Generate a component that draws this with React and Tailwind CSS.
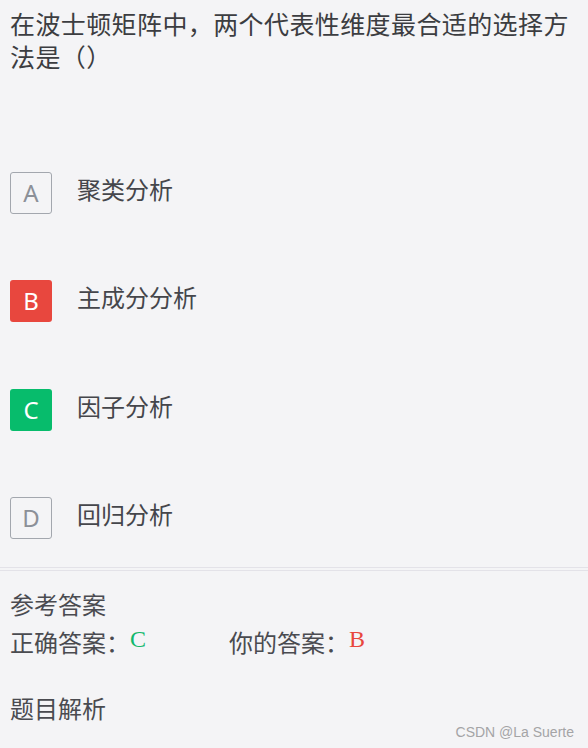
const options = [
  { key: "A", text: "聚类分析", state: "none" },
  { key: "B", text: "主成分分析", state: "wrong" },
  { key: "C", text: "因子分析", state: "right" },
  { key: "D", text: "回归分析", state: "none" },
];

const boxStyles = {
  none: "border border-[#a3a7ae] text-[#8c9098] bg-transparent",
  wrong: "bg-[#e8473e] text-white",
  right: "bg-[#07bc6c] text-white",
};

const font = "font-['Microsoft_YaHei','Noto_Sans_CJK_SC',sans-serif]";

export default function App() {
  return (
    <div className={`w-[588px] h-[748px] bg-[#f4f4f6] text-[#3c3d41] ${font} relative overflow-hidden`}>
      {/* Question */}
      <div className="px-[10px] pt-[7px] text-[25px] leading-[33px] tracking-[0.4px]">
        在波士顿矩阵中，两个代表性维度最合适的选择方法是（）
      </div>

      {/* Options */}
      <div className="mt-[99px] flex flex-col gap-[66.3px] pl-[10px]">
        {options.map((o) => (
          <div key={o.key} className="flex items-center h-[42px]">
            <div
              className={`w-[42px] h-[42px] rounded-[3px] flex items-center justify-center text-[24px] font-['Noto_Sans',sans-serif] ${boxStyles[o.state]}`}
            >
              {o.key}
            </div>
            <div className="ml-[25px] text-[24px] text-[#45464b] -mt-[8px]">{o.text}</div>
          </div>
        ))}
      </div>

      {/* Divider */}
      <div className="mt-[28px] border-t border-b border-[#e3e2e8] h-[4px]" />

      {/* Answer */}
      <div className="px-[10px] pt-[16px] text-[24px] text-[#4a4b50]">
        <div className="leading-[34px]">参考答案</div>
        <div className="mt-[3px] flex items-start leading-[36px]">
          <span>正确答案：</span>
          <span className="-mt-[3px] font-['Liberation_Serif',serif] text-[#12b86c] text-[24px]">C</span>
          <span className="ml-[83px]">你的答案：</span>
          <span className="-mt-[3px] font-['Liberation_Serif',serif] text-[#e8473e] text-[24px]">B</span>
        </div>
        <div className="mt-[31px] leading-[34px]">题目解析</div>
      </div>

      {/* Watermark */}
      <div className="absolute right-[14px] bottom-[5px] text-[14px] text-[#a4a4a6] font-['Liberation_Sans',sans-serif]">
        CSDN @La Suerte
      </div>
    </div>
  );
}
